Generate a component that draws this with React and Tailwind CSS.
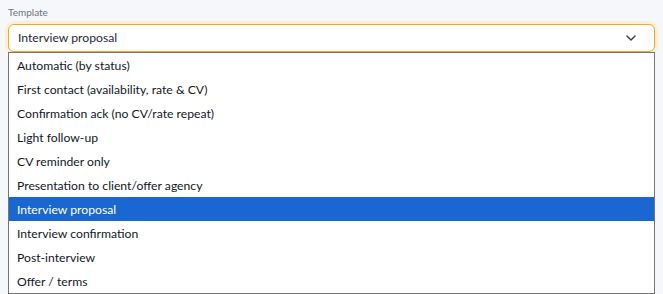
import { ChevronDown } from 'lucide-react';

const options = [
  'Automatic (by status)',
  'First contact (availability, rate & CV)',
  'Confirmation ack (no CV/rate repeat)',
  'Light follow-up',
  'CV reminder only',
  'Presentation to client/offer agency',
  'Interview proposal',
  'Interview confirmation',
  'Post-interview',
  'Offer / terms',
];

const selected = 'Interview proposal';

const App = () => {
  return (
    <div className="h-[294px] w-[663px] overflow-hidden bg-[#f6f7fb] pl-2 pr-2 pt-[5px] font-['Lato','Liberation_Sans',sans-serif]">
      <label className="block text-[10px] leading-[14px] text-[#6b7280]">Template</label>
      <div className="mt-[5px] flex h-[28px] items-center justify-between rounded-md border border-[#f5a623] bg-white pl-[9px] pr-[15px] text-[12.2px] text-[#1f2937] shadow-[0_0_0_3px_#fcefd9]">
        <span className="pt-px">{selected}</span>
        <ChevronDown className="h-[16px] w-[16px] text-[#374151]" strokeWidth={2.2} />
      </div>
      <ul className="w-[647px] border border-[#767676] bg-white text-[12.2px]">
        {options.map((opt) => (
          <li
            key={opt}
            className={
              opt === selected
                ? 'flex h-[24px] items-center bg-[#1a67d2] pl-2 pt-[2px] text-white'
                : 'flex h-[24px] items-center pl-2 pt-[2px] text-[#111827]'
            }
          >
            {opt}
          </li>
        ))}
      </ul>
    </div>
  );
};

export default App;
